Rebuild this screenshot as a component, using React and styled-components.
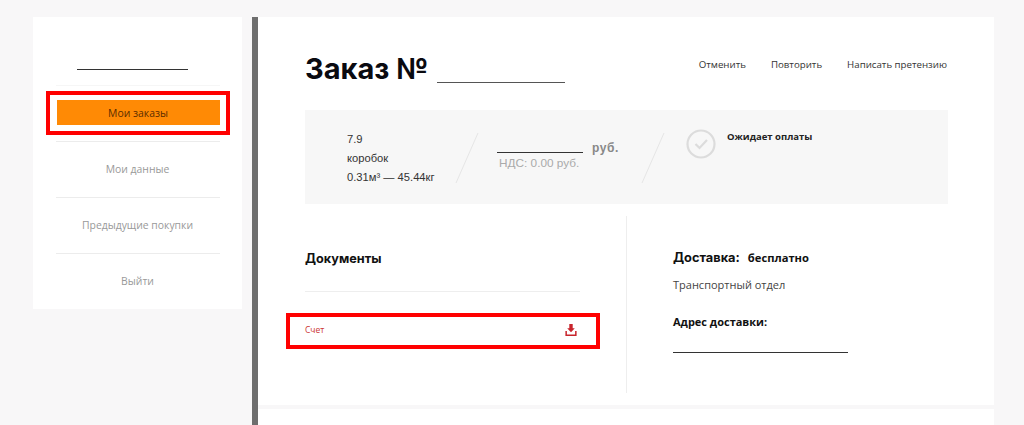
import React from 'react';
import styled, { createGlobalStyle } from 'styled-components';

const Global = createGlobalStyle`
  html, body {
    margin: 0;
    background: #f8f7f8;
    font-family: "Open Sans", "Noto Sans", sans-serif;
  }
`;

const Page = styled.div`
  width: 1024px;
  height: 425px;
  overflow: hidden;
  display: flex;
  align-items: flex-start;
  padding: 17px 0 0 33px;
  box-sizing: border-box;
`;

const Sidebar = styled.aside`
  width: 209px;
  height: 292px;
  background: #fff;
  margin-right: 10px;
  padding-top: 52px;
  box-sizing: border-box;
  display: flex;
  flex-direction: column;
  align-items: center;
`;

const Blank = styled.div`
  width: ${(p) => p.$w}px;
  height: 1px;
  background: #333;
`;

const UserLine = styled(Blank)`
  margin-right: 10px;
  margin-bottom: 15px;
`;

const Nav = styled.nav`
  width: 164px;
  display: flex;
  flex-direction: column;
  border-top: 1px solid #f6f6f6;
`;

const NavItem = styled.a`
  height: 56px;
  padding-bottom: 2px;
  display: flex;
  align-items: center;
  justify-content: center;
  font-size: 10.4px;
  color: #999;
  border-top: 1px solid #ececec;
  box-sizing: border-box;
`;

const ActiveHighlight = styled.div`
  height: 44px;
  margin: 5px -10px 6px;
  padding: 5px 6px 6px 7px;
  box-sizing: border-box;
  border: 4px solid #f00;
  display: flex;
`;

const ActiveButton = styled.a`
  flex: 1;
  background: #ff8a05;
  color: #5b2c00;
  font-size: 10.4px;
  display: flex;
  align-items: center;
  justify-content: center;
`;

const Divider = styled.div`
  width: 6px;
  height: 408px;
  flex: none;
  background: #6e6e6e;
`;

const Main = styled.main`
  width: 736px;
  flex: none;
`;

const OrderCard = styled.section`
  background: #fff;
  height: 388px;
  padding: 0 46px 0 47px;
  box-sizing: border-box;
`;

const HeaderRow = styled.header`
  height: 93px;
  display: flex;
  justify-content: space-between;
  align-items: flex-start;
`;

const Title = styled.h1`
  margin: 32px 0 0;
  display: flex;
  align-items: flex-end;
  gap: 9px;
  font-family: Inter, sans-serif;
  font-size: 29px;
  line-height: 39px;
  font-weight: 700;
  color: #0a0a10;
`;

const TitleBlank = styled(Blank)`
  margin-bottom: 5px;
  background: #555;
`;

const Actions = styled.div`
  display: flex;
  gap: 25px;
  margin: 41px 1px 0 0;
  font-size: 9.7px;
  line-height: 14px;
  color: #333;
`;

const SummaryBar = styled.div`
  height: 94px;
  background: #f7f7f7;
  display: flex;
`;

const Packing = styled.div`
  width: 174px;
  flex: none;
  padding: 20px 0 0 42px;
  box-sizing: border-box;
  font-family: "Liberation Sans", Arial, sans-serif;
  font-size: 11.2px;
  line-height: 19px;
  color: #333;
  position: relative;
`;

const Slash = styled.svg`
  position: absolute;
  top: 22px;
  right: 0;
`;

const Price = styled.div`
  width: 186px;
  flex: none;
  padding: 31px 0 0 18px;
  box-sizing: border-box;
  position: relative;
  font-family: "Liberation Sans", Arial, sans-serif;
`;

const PriceRow = styled.div`
  display: flex;
  align-items: flex-end;
  gap: 9px;
`;

const Rub = styled.span`
  font-size: 12px;
  line-height: 14px;
  font-weight: 700;
  letter-spacing: 0.6px;
  color: #888;
`;

const PriceLine = styled(Blank)`
  margin-bottom: 2px;
`;

const Vat = styled.div`
  font-size: 11.8px;
  line-height: 13px;
  color: #aaa;
  margin: 2px 0 0 2px;
`;

const Status = styled.div`
  display: flex;
  gap: 11px;
  padding: 19px 0 0 21px;
  font-size: 9.5px;
  font-weight: 700;
  line-height: 14px;
  color: #222;
`;

const StatusText = styled.span`
  margin-top: 1px;
`;

const Columns = styled.div`
  display: grid;
  grid-template-columns: 322px 1fr;
  height: 177px;
  margin-top: 12px;
`;

const Docs = styled.div`
  border-right: 1px solid #eee;
  padding-top: 35px;
`;

const SectionTitle = styled.h2`
  margin: 0;
  font-family: Inter, sans-serif;
  font-size: 12.7px;
  line-height: 16px;
  font-weight: 700;
  color: #111;
`;

const DocsRule = styled.div`
  width: 275px;
  height: 1px;
  background: #eee;
  margin-top: 24px;
`;

const DocRow = styled.a`
  width: 314px;
  height: 36px;
  margin: 21px 0 0 -19px;
  padding: 0 19px 3px 15px;
  box-sizing: border-box;
  border: 4px solid #f00;
  display: flex;
  align-items: center;
  justify-content: space-between;
  font-size: 8.5px;
  color: #c33;
`;

const Delivery = styled.div`
  padding: 34px 0 0 46px;
`;

const DeliveryHead = styled.div`
  display: flex;
  align-items: baseline;
  gap: 8px;
`;

const DeliveryLabel = styled.span`
  font-family: Inter, sans-serif;
  font-size: 12.8px;
  line-height: 16px;
  font-weight: 700;
  color: #111;
`;

const DeliveryPrice = styled.span`
  font-size: 11.2px;
  font-weight: 700;
  color: #111;
`;

const Text = styled.div`
  margin-top: 11px;
  font-size: 11px;
  line-height: 15px;
  color: #444;
`;

const AddressLabel = styled.div`
  margin-top: 22px;
  font-size: 11px;
  line-height: 15px;
  font-weight: 700;
  color: #111;
`;

const AddressLine = styled(Blank)`
  margin-top: 23px;
`;

const NextCard = styled.section`
  background: #fff;
  height: 40px;
  margin-top: 4px;
`;

const SlashMark = () => (
  <Slash width="24" height="52" viewBox="0 0 24 52">
    <line x1="23" y1="1" x2="1" y2="51" stroke="#e6e6e6" strokeWidth="1" />
  </Slash>
);

const CheckCircle = () => (
  <svg width="30" height="30" viewBox="0 0 30 30" fill="none">
    <circle cx="15" cy="15" r="13.5" stroke="#dcdcdc" strokeWidth="2.2" />
    <path d="M9.5 15l4 4 7.5-8" stroke="#dcdcdc" strokeWidth="2.2" />
  </svg>
);

const DownloadIcon = () => (
  <svg width="12" height="12" viewBox="0 0 12 12" fill="#c8242c">
    <path d="M4.3 0h3.4v4.2h2.1L6 8.2 2.2 4.2h2.1z" />
    <path d="M0.4 7h1.5v3.4h8.2V7h1.5v5H0.4z" />
  </svg>
);

export default function App() {
  return (
    <>
      <Global />
      <Page>
        <Sidebar>
          <UserLine $w={111} />
          <Nav>
            <ActiveHighlight>
              <ActiveButton>Мои заказы</ActiveButton>
            </ActiveHighlight>
            <NavItem>Мои данные</NavItem>
            <NavItem>Предыдущие покупки</NavItem>
            <NavItem>Выйти</NavItem>
          </Nav>
        </Sidebar>
        <Divider />
        <Main>
          <OrderCard>
            <HeaderRow>
              <Title>
                Заказ №
                <TitleBlank $w={128} />
              </Title>
              <Actions>
                <span>Отменить</span>
                <span>Повторить</span>
                <span>Написать претензию</span>
              </Actions>
            </HeaderRow>
            <SummaryBar>
              <Packing>
                7.9<br />
                коробок<br />
                0.31м³ — 45.44кг
                <SlashMark />
              </Packing>
              <Price>
                <PriceRow>
                  <PriceLine $w={86} />
                  <Rub>руб.</Rub>
                </PriceRow>
                <Vat>НДС: 0.00 руб.</Vat>
                <SlashMark />
              </Price>
              <Status>
                <CheckCircle />
                <StatusText>Ожидает оплаты</StatusText>
              </Status>
            </SummaryBar>
            <Columns>
              <Docs>
                <SectionTitle>Документы</SectionTitle>
                <DocsRule />
                <DocRow>
                  Счет
                  <DownloadIcon />
                </DocRow>
              </Docs>
              <Delivery>
                <DeliveryHead>
                  <DeliveryLabel>Доставка:</DeliveryLabel>
                  <DeliveryPrice>бесплатно</DeliveryPrice>
                </DeliveryHead>
                <Text>Транспортный отдел</Text>
                <AddressLabel>Адрес доставки:</AddressLabel>
                <AddressLine $w={175} />
              </Delivery>
            </Columns>
          </OrderCard>
          <NextCard />
        </Main>
      </Page>
    </>
  );
}
